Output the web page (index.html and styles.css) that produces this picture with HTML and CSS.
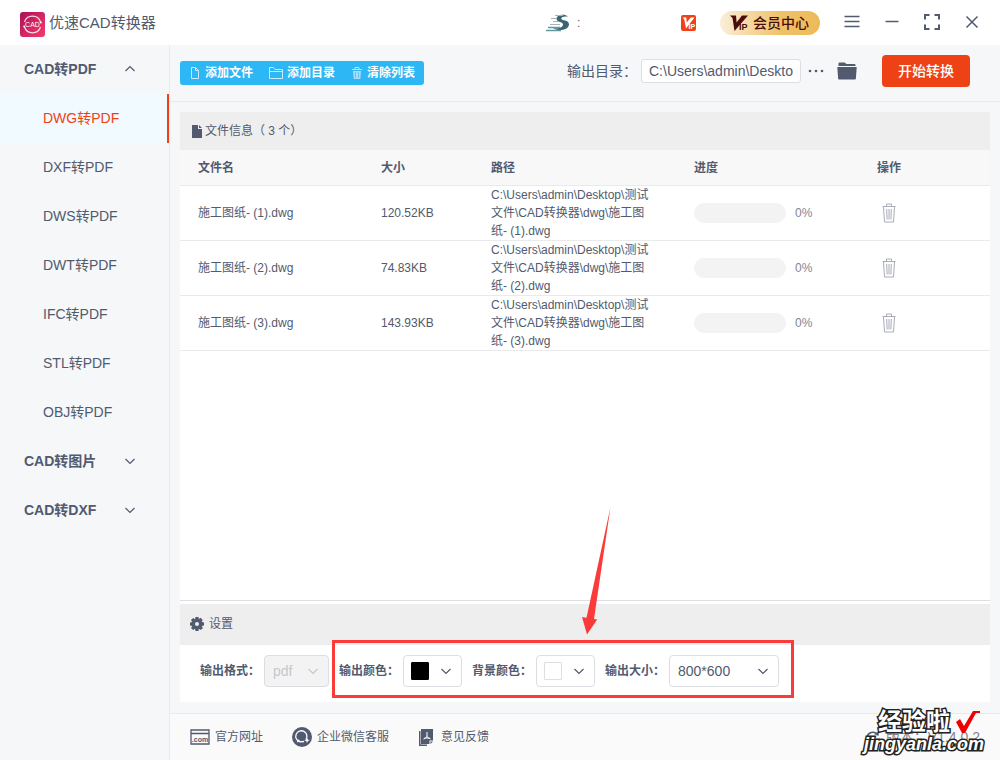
FILE: index.html
```html
<!DOCTYPE html>
<html lang="zh-CN">
<head>
<meta charset="utf-8">
<meta name="viewport" content="width=device-width, initial-scale=1">
<title>优速CAD转换器</title>
<link rel="stylesheet" href="styles.css">
</head>
<body>
<svg class="defs" aria-hidden="true">
  <symbol id="chevron" viewBox="0 0 12 12"><path d="M1.500 4 6 8.500 10.500 4" fill="none" stroke="currentColor" stroke-width="1.200"/></symbol>
  <symbol id="trash" viewBox="0 0 14 20"><path d="M.5 3.500h13M4.500 3V1h5v2M1.500 4l1 15h9l1-15M4.700 6l.4 10.500M7 6v10.500M9.300 6l-.4 10.500" fill="none" stroke="currentColor"/></symbol>
</svg>
<div class="app">
  <header class="titlebar">
    <div class="brand">
      <svg class="brand-logo" viewBox="0 0 25 25" aria-hidden="true">
        <defs><linearGradient id="lg" x1="0" y1="0" x2="1" y2="1"><stop offset="0" stop-color="#ab1057"/><stop offset="1" stop-color="#f53c6c"/></linearGradient></defs>
        <rect width="25" height="25" rx="3" fill="url(#lg)"/>
        <path d="M4.500 10a8.400 8.400 0 0 1 16 0M20.500 15a8.400 8.400 0 0 1-16 0" fill="none" stroke="#fbdde7" stroke-width="1.200"/>
        <circle cx="20.800" cy="10.500" r="1" fill="#fff"/><circle cx="4.200" cy="14.500" r="1" fill="#fff"/>
        <text x="12.500" y="15" text-anchor="middle" class="logo-text">CAD</text>
      </svg>
      <span>优速CAD转换器</span>
    </div>
    <div class="account">
      <svg class="avatar" viewBox="0 0 24 20" aria-hidden="true">
        <path d="M22 3.500C19 .6 11 1 10.500 5.500c-.3 4 6.500 3 6.500 6 0 3-5 4.200-10 3.800 5 3.200 15.500 2 16-3.800C23.300 6.500 15 8 15.300 5.500c.2-2 4.700-2 6.700-2z" fill="#3b6570"/>
        <path d="M9 2.500h8M5 5.500h6M7 8.500h6M4 11.500h10" stroke="#a5b5ba" fill="none"/>
        <path d="M2 14.500h12M0 17.500h15" stroke="#5f9aa0" fill="none" stroke-width="1.500"/>
      </svg>
      <span class="user-name">:</span>
      <svg class="vip-badge" viewBox="0 0 15 16" aria-hidden="true"><rect width="15" height="16" rx="2" fill="#f04216"/><path d="M1.500 2.500h3.800l.4 5L9.800 2.500h3.700L5 13.500 3.300 4.500z" fill="#fff"/><text x="7.500" y="13.500" class="badge-text">IP</text></svg>
      <button class="vip" type="button">
        <svg width="19" height="18" viewBox="0 0 19 18" aria-hidden="true"><path d="M0 1.500h6l.6 7L12 1.500h6L4.500 17 2.500 4z" fill="#4a0d0b"/><text x="9" y="16" class="vip-text">IP</text></svg>
        会员中心
      </button>
    </div>
    <div class="window-controls">
      <button type="button" aria-label="菜单"><svg viewBox="0 0 16 16"><path d="M.5 1.500h15M.5 6.500h15M.5 11.500h15"/></svg></button>
      <button type="button" aria-label="最小化"><svg viewBox="0 0 16 16"><path d="M1.500 6.500h13"/></svg></button>
      <button type="button" aria-label="最大化"><svg viewBox="0 0 16 16"><path d="M1 4.500V0h4.500M10.500 0H15v4.500M15 9.500V14h-4.500M5.500 14H1V9.500" stroke-width="2"/></svg></button>
      <button type="button" aria-label="关闭"><svg viewBox="0 0 16 16"><path d="m2.500 1.500 11 11M13.500 1.500l-11 11"/></svg></button>
    </div>
  </header>
  <div class="workspace">
    <nav class="sidebar">
      <button class="group" type="button" aria-expanded="true">CAD转PDF<svg class="chevron up"><use href="#chevron"/></svg></button>
      <a class="item active" href="#dwg">DWG转PDF</a>
      <a class="item" href="#dxf">DXF转PDF</a>
      <a class="item" href="#dws">DWS转PDF</a>
      <a class="item" href="#dwt">DWT转PDF</a>
      <a class="item" href="#ifc">IFC转PDF</a>
      <a class="item" href="#stl">STL转PDF</a>
      <a class="item" href="#obj">OBJ转PDF</a>
      <button class="group" type="button" aria-expanded="false">CAD转图片<svg class="chevron"><use href="#chevron"/></svg></button>
      <button class="group" type="button" aria-expanded="false">CAD转DXF<svg class="chevron"><use href="#chevron"/></svg></button>
    </nav>
    <main class="content">
      <div class="toolbar">
        <div class="file-actions">
          <button type="button"><svg width="11" height="12" viewBox="0 0 11 12"><path d="M1.500.5h4l3 3v8h-7zM5.500.5v3h3" fill="none" stroke="#c8eafc"/></svg>添加文件</button>
          <button type="button"><svg width="14" height="12" viewBox="0 0 14 12"><path d="M.5 11.500V.5h4l1.500 2h7.500v9zM.5 4.500h13" fill="none" stroke="#c8eafc"/></svg>添加目录</button>
          <button type="button"><svg width="12" height="12" viewBox="0 0 12 12"><path d="M1 2.500h10M4 2V.5h4V2" fill="none" stroke="#b5e3fb"/><path d="M2 4h8l-.7 8H2.700z" fill="#a7ddfa"/><path d="M4.500 5v6M7.500 5v6" stroke="#62c7f8"/></svg>清除列表</button>
        </div>
        <div class="output">
          <label for="outdir">输出目录：</label>
          <input id="outdir" type="text" value="C:\Users\admin\Deskto">
          <button class="more" type="button" aria-label="更多"><svg width="16" height="4" viewBox="0 0 16 4"><g fill="#515a6e"><circle cx="2" cy="2" r="1.300"/><circle cx="8" cy="2" r="1.300"/><circle cx="14" cy="2" r="1.300"/></g></svg></button>
          <button class="folder" type="button" aria-label="打开目录"><svg width="20" height="18" viewBox="0 0 20 18"><path d="M1.500 4V1.500Q1.500.5 2.500.5h5l2 1.500h8q1 0 1 1v1z" fill="#515a6e"/><path d="M.3 5h19.400l-.8 11.500q-.1 1-1 1H2.100q-.9 0-1-1z" fill="#515a6e"/></svg></button>
          <button class="start" type="button">开始转换</button>
        </div>
      </div>
      <section class="files">
        <h2 class="bar"><svg width="10" height="13" viewBox="0 0 10 13"><path d="M0 0h6v4h4v9H0zM7 0l3 3H7z" fill="#515a6e"/></svg>文件信息（ 3 个）</h2>
        <table>
          <thead><tr><th class="c-name">文件名</th><th class="c-size">大小</th><th class="c-path">路径</th><th class="c-progress">进度</th><th>操作</th></tr></thead>
          <tbody>
            <tr><td>施工图纸- (1).dwg</td><td>120.52KB</td><td class="path">C:\Users\admin\Desktop\测试文件\CAD转换器\dwg\施工图纸- (1).dwg</td><td><div class="progress"><span class="track"></span>0%</div></td><td><button class="delete" type="button" aria-label="删除"><svg width="14" height="20"><use href="#trash"/></svg></button></td></tr>
            <tr><td>施工图纸- (2).dwg</td><td>74.83KB</td><td class="path">C:\Users\admin\Desktop\测试文件\CAD转换器\dwg\施工图纸- (2).dwg</td><td><div class="progress"><span class="track"></span>0%</div></td><td><button class="delete" type="button" aria-label="删除"><svg width="14" height="20"><use href="#trash"/></svg></button></td></tr>
            <tr><td>施工图纸- (3).dwg</td><td>143.93KB</td><td class="path">C:\Users\admin\Desktop\测试文件\CAD转换器\dwg\施工图纸- (3).dwg</td><td><div class="progress"><span class="track"></span>0%</div></td><td><button class="delete" type="button" aria-label="删除"><svg width="14" height="20"><use href="#trash"/></svg></button></td></tr>
          </tbody>
        </table>
      </section>
      <section class="settings">
        <h2 class="bar"><svg width="14" height="14" viewBox="0 0 14 14"><path d="M5.500 0h3l.4 2 1.700-1.200 2.100 2.100L11.600 4.700l2.400.7v3l-2.300.5 1.200 2-2.100 2.100-1.900-1.200-.4 2.200h-3L5 11.800 3.100 13 1 10.900l1.300-2L0 8.500v-3l2.200-.6L1 3.100 3.100 1 5 2.200z" fill="#515a6e"/><circle cx="7" cy="7" r="2" fill="#eee"/></svg>设置</h2>
        <form class="fields">
          <div class="field">
            <label for="format">输出格式：</label>
            <div class="select format"><select id="format" disabled><option>pdf</option></select><svg class="chevron"><use href="#chevron"/></svg></div>
          </div>
          <div class="highlight">
            <div class="field"><span class="label" id="l-color">输出颜色：</span><button class="color" type="button" aria-labelledby="l-color"><span class="swatch black"></span><svg class="chevron"><use href="#chevron"/></svg></button></div>
            <div class="field"><span class="label" id="l-bg">背景颜色：</span><button class="color" type="button" aria-labelledby="l-bg"><span class="swatch"></span><svg class="chevron"><use href="#chevron"/></svg></button></div>
            <div class="field"><label for="size">输出大小：</label><div class="select size"><select id="size"><option>800*600</option></select><svg class="chevron"><use href="#chevron"/></svg></div></div>
            <svg class="arrow" viewBox="0 0 32 130" aria-hidden="true"><path d="M30.500 1 14 113l3.200.6L7 128.500 2 111l4.500.8z" fill="#fb3b3a"/></svg>
          </div>
        </form>
      </section>
      <footer class="footer">
        <a href="#site"><svg width="20" height="16" viewBox="0 0 20 16"><path d="M1 1h18v14H1zM1 4.500h18" fill="none" stroke="#515a6e" stroke-width="1.300"/><text x="10" y="12.500" text-anchor="middle" class="com-text">.com</text></svg>官方网址</a>
        <a href="#wechat"><svg width="20" height="20" viewBox="0 0 20 20"><circle cx="10" cy="10" r="10" fill="#515a6e"/><path d="M14 12.500A5.600 5.600 0 1 0 8 14.800l4-.3" fill="none" stroke="#fff" stroke-width="1.300"/><path d="m5.500 12-.5 3.500L8.500 14" fill="#fff"/><path d="m15 10.500.8 2 2 .8-2 .8-.8 2-.8-2-2-.8 2-.8z" fill="#fff"/></svg>企业微信客服</a>
        <a href="#feedback"><svg width="18" height="17" viewBox="0 0 18 17"><path d="M1 2h1.500v13.500H9V17H1z" fill="#515a6e"/><path d="M3 0h12v11.500H11.500V15H3zM12.500 12.500H15L12.500 15z" fill="#515a6e"/><path d="M9 3v3.500M5.500 10C8.500 9 9 7.500 9 6.500c0 1.500 1 3 3.500 3.200M6.500 9h5" fill="none" stroke="#fff"/></svg>意见反馈</a>
        <div class="version"><svg width="14" height="14" viewBox="0 0 14 14"><path d="M1 7a6 6 0 0 1 10-3" fill="none" stroke="#515a6e" stroke-width="1.500"/><path d="m13 1-.5 5L8 4z" fill="#515a6e"/></svg><span>版本：V1.4.0.2</span></div>
        <div class="watermark">
          <div class="wm-top"><span>经验啦</span><svg width="24" height="24" viewBox="0 0 24 24"><path d="m0 12 4-3 4 7L17 1h7v2h-4L9 23H6z" fill="#f00000"/></svg></div>
          <div class="wm-url">jingyanla.com</div>
        </div>
      </footer>
    </main>
  </div>
</div>
</body>
</html>
```

FILE: styles.css
```css
* { box-sizing: border-box; }
body {
  margin: 0;
  color: #515a6e;
  font: 12px/18px "Liberation Sans", "Noto Sans CJK SC", sans-serif;
}
button, input, select { font: inherit; color: inherit; }
button { padding: 0; border: 0; background: none; cursor: pointer; }
a { color: inherit; text-decoration: none; }
svg { flex: none; }
.defs { display: none; }
.chevron { width: 12px; height: 12px; }
.chevron.up { transform: rotate(180deg); }

.app { display: flex; flex-direction: column; min-height: 100vh; background: #f5f7f9; }

.titlebar { display: flex; align-items: center; height: 45px; padding: 0 20px; background: #fff; }
.brand { display: flex; align-items: center; gap: 4px; flex: 1; font-size: 15px; line-height: 24px; }
.brand-logo { width: 25px; height: 25px; margin-top: 4px; }
.logo-text { font-size: 7px; fill: #fff; }
.account { display: flex; align-items: center; }
.avatar { width: 24px; height: 20px; }
.user-name { width: 111px; padding-left: 7px; }
.vip-badge { width: 15px; height: 16px; }
.badge-text { font-size: 7px; font-weight: bold; fill: #fff; }
.vip {
  display: flex; align-items: center; gap: 4px; height: 24px;
  margin-left: 24px; padding: 0 11px 0 10px; border-radius: 12px;
  background: linear-gradient(90deg, #fbeed9, #efc268 60%, #edba58);
  color: #4a0d0b; font-size: 14px; font-weight: 500;
}
.vip-text { font-size: 9px; font-weight: bold; fill: #4a0d0b; }
.window-controls { display: flex; gap: 24px; margin-left: 24px; }
.window-controls button { display: flex; width: 16px; height: 16px; }
.window-controls svg { width: 16px; height: 16px; fill: none; stroke: #515a6e; stroke-width: 1.5; overflow: visible; }

.workspace { display: flex; flex: 1; }
.sidebar { display: flex; flex-direction: column; width: 170px; border-right: 1px solid #e8eaec; font-size: 14px; }
.group {
  display: flex; align-items: center; justify-content: space-between;
  height: 49px; padding: 0 33px 2px 24px; font-weight: bold;
}
.item { display: flex; align-items: center; height: 49px; padding: 0 0 2px 43px; }
.item.active { border-right: 2px solid #ef4116; background: #f0faff; color: #ef4116; }

.content { display: flex; flex-direction: column; flex: 1; min-width: 0; }
.toolbar {
  display: flex; align-items: center; justify-content: space-between;
  height: 57px; padding: 0 30px 4px 10px; border-bottom: 1px solid #e8eaec;
}
.file-actions {
  display: flex; gap: 16px; height: 24px; margin-top: 4px; padding: 0 9px 0 10px;
  border-radius: 3px; background: #2db7f5; color: #fff;
}
.file-actions button { display: flex; align-items: center; gap: 4px; font-weight: bold; }
.output { display: flex; align-items: center; font-size: 14px; }
.output label { width: 74px; }
.output input {
  width: 160px; height: 24px; padding: 0 7px;
  border: 1px solid #dcdee2; border-radius: 3px; background: #fff;
}
.more { display: flex; margin-left: 7px; }
.folder { display: flex; margin-left: 13px; }
.start {
  height: 32px; margin-left: 25px; padding: 0 16px;
  border-radius: 4px; background: #ef4116; color: #fff; font-weight: 500;
}

.bar {
  display: flex; align-items: center; margin: 0;
  background: #eee; font-size: 12px; font-weight: normal;
}
.files {
  flex: 1; margin: 10px 10px 0;
  border-bottom: 1px solid #dcdee2; background: #fff;
}
.files .bar { gap: 3px; height: 38px; padding: 0 12px; }
table { width: 100%; border-collapse: collapse; table-layout: fixed; }
th, td { height: 55px; padding: 0 18px; border-bottom: 1px solid #e8eaec; text-align: left; }
th { height: 35px; padding-top: 2px; background: #f8f8f9; }
.c-name { width: 183px; }
.c-size { width: 110px; }
.c-path { width: 203px; }
.c-progress { width: 183px; }
.progress { display: flex; align-items: center; gap: 9px; color: #808695; }
.track { width: 92px; height: 20px; border-radius: 10px; background: #f3f3f3; }
.path { word-break: break-all; }
.delete { display: flex; margin-left: 5px; color: #a8acb7; }

.settings { margin: 0 10px; padding-top: 3px; background: #fff; }
.settings .bar { gap: 5px; height: 41px; padding: 0 10px 2px; }
.fields { display: flex; align-items: center; gap: 3px; height: 57px; padding: 0 0 5px 20px; }
.field { display: flex; align-items: center; gap: 4px; }
.field label, .label { width: 60px; font-weight: bold; }
.select { display: grid; align-items: center; font-size: 14px; }
.select select, .select .chevron { grid-area: 1 / 1; }
.select .chevron { justify-self: end; margin-right: 10px; pointer-events: none; }
.select select, .color {
  height: 32px; border: 1px solid #dcdee2; border-radius: 4px; background: #fff;
}
.select select { width: 100%; padding: 0 8px; appearance: none; }
.format { width: 65px; color: #c5c8ce; }
.format select { background: #f3f3f3; opacity: 1; color: #c5c8ce; }
.size { width: 110px; }
.color { display: flex; align-items: center; gap: 11px; width: 59px; padding-left: 7px; }
.swatch { width: 18px; height: 18px; border: 1px solid #dcdee2; border-radius: 1px; }
.swatch.black { border-color: #000; background: #000; }
.highlight {
  position: relative; display: flex; align-items: center; gap: 10px;
  height: 58px; padding: 4px 12px 0 4px; margin-top: -4px;
  border: 3px solid #fb3b3a;
}
.arrow { position: absolute; left: 245px; bottom: 59px; width: 32px; height: 130px; }

.footer {
  position: relative; display: flex; align-items: center; gap: 29px;
  height: 47px; margin-top: 11px; padding: 0 20px;
  border-top: 1px solid #e8eaec; background: #fafafa;
}
.footer a { display: flex; align-items: center; gap: 5px; }
.com-text { font-size: 7px; font-weight: bold; fill: #515a6e; }
.version { display: flex; align-items: center; gap: 6px; margin-left: auto; font-size: 14px; color: #808695; }
.watermark {
  position: absolute; right: 16px; bottom: 6px;
  color: #fff; font-weight: bold; font-style: oblique 8deg;
  -webkit-text-stroke: 3px #222; paint-order: stroke fill;
}
.wm-top { display: flex; align-items: center; gap: 6px; padding-left: 14px; font-size: 24px; line-height: 24px; }
.wm-url { font-size: 18px; line-height: 20px; }
```
